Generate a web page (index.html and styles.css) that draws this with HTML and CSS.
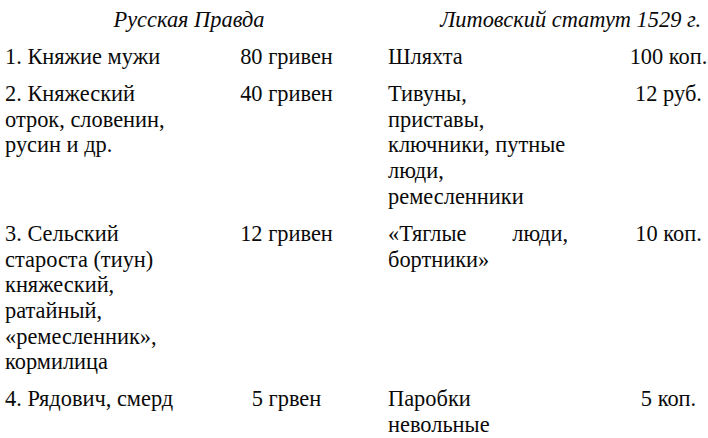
FILE: index.html
```html
<!DOCTYPE html>
<html lang="ru">
<head>
<meta charset="utf-8">
<title>Русская Правда и Литовский статут</title>
<link rel="stylesheet" href="styles.css">
</head>
<body>
<div class="table">
  <div class="head head-left">Русская Правда</div>
  <div class="head head-right">Литовский статут 1529 г.</div>

  <div class="c1">1. Княжие мужи</div>
  <div class="c2">80 гривен</div>
  <div class="c3">Шляхта</div>
  <div class="c4">100 коп.</div>

  <div class="c1">2. Княжеский отрок, словенин, русин и др.</div>
  <div class="c2">40 гривен</div>
  <div class="c3">Тивуны,<br>приставы,<br>ключники, путные люди,<br>ремесленники</div>
  <div class="c4">12 руб.</div>

  <div class="c1">3. Сельский староста (тиун) княжеский, ратайный, «ремесленник», кормилица</div>
  <div class="c2">12 гривен</div>
  <div class="c3 just">«Тяглые люди, бортники»</div>
  <div class="c4">10 коп.</div>

  <div class="c1">4. Рядович, смерд</div>
  <div class="c2">5 грвен</div>
  <div class="c3">Паробки<br>невольные</div>
  <div class="c4">5 коп.</div>
</div>
</body>
</html>
```

FILE: styles.css
```css
html, body {
  margin: 0;
  padding: 0;
  background: #ffffff;
}

body {
  font-family: "Liberation Serif", "Times New Roman", serif;
  font-size: 22.4px;
  line-height: 25.7px;
  color: #0a0a0a;
}

.table {
  display: grid;
  grid-template-columns: 180px 203px 180px 1fr;
  row-gap: 11.3px;
  padding: 7px 0 0 5px;
}

.head {
  font-style: italic;
  grid-column: span 2;
}

.head-left {
  text-align: center;
  padding-right: 15px;
}

.head-right {
  text-align: right;
  padding-right: 7px;
}

.c1 {
  padding-right: 2px;
}

.c2 {
  text-align: center;
}

.c3 {
  text-align: left;
}

.c3.just {
  text-align: justify;
}

.c4 {
  text-align: center;
  padding-left: 61px;
}
```
